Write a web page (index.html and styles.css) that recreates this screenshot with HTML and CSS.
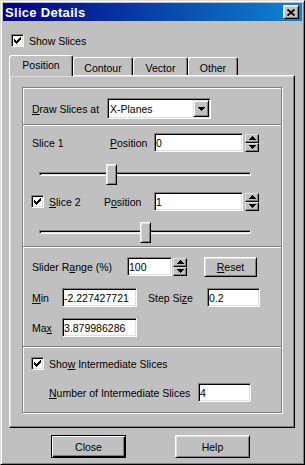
FILE: index.html
```html
<!DOCTYPE html>
<html lang="en">
<head>
    <meta charset="UTF-8">
    <title>Slice Details</title>
    <link rel="stylesheet" href="styles.css">
</head>
<body>

<div class="window">
    <div class="titlebar">
        <span class="title">Slice Details</span>
        <button class="title-close" type="button">
            <svg width="8" height="7" viewBox="0 0 8 7"><path d="M0.5 0.5L7.5 6.5M7.5 0.5L0.5 6.5" stroke="#000" stroke-width="1.8"/></svg>
        </button>
    </div>

    <div class="dialog-body">
        <div class="check-row top-check">
            <span class="check"><svg width="7" height="7" viewBox="0 0 7 7"><path d="M0 2h1v3h-1zM1 3h1v3h-1zM2 4h1v3h-1zM3 3h1v3h-1zM4 2h1v3h-1zM5 1h1v3h-1zM6 0h1v3h-1z" fill="#000"/></svg></span>
            <span class="check-text">Show Slices</span>
        </div>

        <div class="tabs">
            <div class="tab active tab-position">Position</div>
            <div class="tab tab-contour">Contour</div>
            <div class="tab tab-vector">Vector</div>
            <div class="tab tab-other">Other</div>
        </div>

        <div class="tab-panel">
            <div class="group">

                <!-- plane selection -->
                <div class="section sec-draw">
                    <div class="row row-combo">
                        <span class="lbl lbl-draw"><u>D</u>raw Slices at</span>
                        <div class="combo">
                            <span class="combo-value">X-Planes</span>
                            <span class="combo-btn"><svg width="7" height="4" viewBox="0 0 7 4"><path d="M0 0h7v1h-1v1h-1v1h-1v1h-1v-1h-1v-1h-1v-1h-1z" fill="#000"/></svg></span>
                        </div>
                    </div>
                </div>

                <!-- slice positions -->
                <div class="section sec-slices">
                    <div class="row">
                        <span class="lbl lbl-slice1">Slice 1</span>
                        <span class="lbl lbl-pos1"><u>P</u>osition</span>
                        <input class="edit edit-pos" type="text" value="0">
                        <div class="spin">
                            <span class="spin-btn"><svg width="7" height="4" viewBox="0 0 7 4"><path d="M3 0h1v1h1v1h1v1h1v1h-7v-1h1v-1h1v-1h1z" fill="#000"/></svg></span>
                            <span class="spin-btn"><svg width="7" height="4" viewBox="0 0 7 4"><path d="M0 0h7v1h-1v1h-1v1h-1v1h-1v-1h-1v-1h-1v-1h-1z" fill="#000"/></svg></span>
                        </div>
                    </div>
                    <div class="slider slider-1">
                        <div class="track"></div>
                        <div class="thumb" style="left: 67px"></div>
                    </div>
                    <div class="row row-slice2">
                        <div class="check-row check-slice2">
                            <span class="check"><svg width="7" height="7" viewBox="0 0 7 7"><path d="M0 2h1v3h-1zM1 3h1v3h-1zM2 4h1v3h-1zM3 3h1v3h-1zM4 2h1v3h-1zM5 1h1v3h-1zM6 0h1v3h-1z" fill="#000"/></svg></span>
                            <span class="check-text"><u>S</u>lice 2</span>
                        </div>
                        <span class="lbl lbl-pos2">P<u>o</u>sition</span>
                        <input class="edit edit-pos" type="text" value="1">
                        <div class="spin">
                            <span class="spin-btn"><svg width="7" height="4" viewBox="0 0 7 4"><path d="M3 0h1v1h1v1h1v1h1v1h-7v-1h1v-1h1v-1h1z" fill="#000"/></svg></span>
                            <span class="spin-btn"><svg width="7" height="4" viewBox="0 0 7 4"><path d="M0 0h7v1h-1v1h-1v1h-1v1h-1v-1h-1v-1h-1v-1h-1z" fill="#000"/></svg></span>
                        </div>
                    </div>
                    <div class="slider slider-2">
                        <div class="track"></div>
                        <div class="thumb" style="left: 101px"></div>
                    </div>
                </div>

                <!-- slider range -->
                <div class="section sec-range">
                    <div class="row">
                        <span class="lbl lbl-range">Slider R<u>a</u>nge (%)</span>
                        <input class="edit edit-range" type="text" value="100">
                        <div class="spin">
                            <span class="spin-btn"><svg width="7" height="4" viewBox="0 0 7 4"><path d="M3 0h1v1h1v1h1v1h1v1h-7v-1h1v-1h1v-1h1z" fill="#000"/></svg></span>
                            <span class="spin-btn"><svg width="7" height="4" viewBox="0 0 7 4"><path d="M0 0h7v1h-1v1h-1v1h-1v1h-1v-1h-1v-1h-1v-1h-1z" fill="#000"/></svg></span>
                        </div>
                        <button class="btn btn-reset" type="button"><u>R</u>eset</button>
                    </div>
                    <div class="row row-min">
                        <span class="lbl lbl-minmax"><u>M</u>in</span>
                        <input class="edit edit-minmax" type="text" value="-2.227427721">
                        <span class="lbl lbl-step">Step Si<u>z</u>e</span>
                        <input class="edit edit-small" type="text" value="0.2">
                    </div>
                    <div class="row row-max">
                        <span class="lbl lbl-minmax">Ma<u>x</u></span>
                        <input class="edit edit-minmax" type="text" value="3.879986286">
                    </div>
                </div>

                <!-- intermediate slices -->
                <div class="section sec-inter">
                    <div class="check-row check-inter">
                        <span class="check"><svg width="7" height="7" viewBox="0 0 7 7"><path d="M0 2h1v3h-1zM1 3h1v3h-1zM2 4h1v3h-1zM3 3h1v3h-1zM4 2h1v3h-1zM5 1h1v3h-1zM6 0h1v3h-1z" fill="#000"/></svg></span>
                        <span class="check-text">Sho<u>w</u> Intermediate Slices</span>
                    </div>
                    <div class="row row-number">
                        <span class="lbl lbl-number"><u>N</u>umber of Intermediate Slices</span>
                        <input class="edit edit-small" type="text" value="4">
                    </div>
                </div>

            </div>
        </div>

        <div class="buttons">
            <button class="btn btn-default" type="button">Close</button>
            <button class="btn btn-help" type="button">Help</button>
        </div>
    </div>
</div>

</body>
</html>
```

FILE: styles.css
```css
body {
    margin: 0;
    background-color: #c0c0c0;
}
.window {
    width: 305px;
    height: 465px;
    box-sizing: border-box;
    padding: 2px;
    border: 1px solid;
    border-color: #dfdfdf #000 #000 #dfdfdf;
    box-shadow: inset 1px 1px #fff, inset -1px -1px #808080;
    background-color: #c0c0c0;
    font-family: "Liberation Sans", Arial, sans-serif;
    font-size: 10.5px;
    color: #000;
}
button, input {
    font: inherit;
    color: inherit;
    margin: 0;
}
u {
    text-decoration: underline;
    text-underline-offset: 1px;
}

/* title bar */
.titlebar {
    height: 18px;
    display: flex;
    align-items: center;
    justify-content: space-between;
    padding: 0 3px 0 2px;
    background: linear-gradient(to right, #000080, #1084d0);
}
.title {
    color: #fff;
    font-weight: bold;
    font-size: 13px;
    letter-spacing: 0.3px;
}
.title-close {
    width: 16px;
    height: 14px;
    padding: 0;
    display: flex;
    align-items: center;
    justify-content: center;
    background-color: #c0c0c0;
    border: 1px solid;
    border-color: #fff #000 #000 #fff;
    box-shadow: inset 1px 1px #dfdfdf, inset -1px -1px #808080;
}

.dialog-body {
    padding: 13px 7px 0 6px;
}

/* check boxes */
.check-row {
    display: flex;
    align-items: center;
    height: 13px;
}
.check {
    width: 13px;
    height: 13px;
    box-sizing: border-box;
    flex: none;
    display: flex;
    align-items: center;
    justify-content: center;
    background-color: #fff;
    border: 1px solid;
    border-color: #808080 #fff #fff #808080;
    box-shadow: inset 1px 1px #000, inset -1px -1px #dfdfdf;
}
.check-text {
    margin-left: 5px;
}
.top-check {
    margin-left: 2px;
}

/* tabs */
.tabs {
    display: flex;
    align-items: flex-end;
    height: 20px;
    margin-top: 8px;
}
.tab {
    height: 18px;
    box-sizing: border-box;
    padding-top: 2px;
    display: flex;
    align-items: center;
    justify-content: center;
    border: 1px solid;
    border-bottom: 0;
    border-color: #fff #000 #000 #fff;
    border-radius: 3px 3px 0 0;
    box-shadow: inset -1px 0 #808080;
}
.tab.active {
    height: 21px;
    padding: 0 0 2px;
    margin-bottom: -1px;
    position: relative;
    z-index: 1;
    background-color: #c0c0c0;
}
.tab-position { width: 64px; }
.tab-contour { width: 60px; }
.tab-vector { width: 55px; }
.tab-other { width: 50px; }

.tab-panel {
    height: 353px;
    box-sizing: border-box;
    padding: 11px 0 0 12px;
    border: 1px solid;
    border-color: #fff #000 #000 #fff;
    box-shadow: inset -1px -1px #808080, inset 1px 1px #dfdfdf;
}

/* etched group */
.group {
    width: 260px;
    height: 326px;
    box-sizing: border-box;
    display: flex;
    flex-direction: column;
    border: 1px solid #808080;
    box-shadow: 1px 1px #fff, inset 1px 1px #fff;
}
.section {
    box-sizing: border-box;
    padding-left: 9px;
}
.section + .section {
    border-top: 1px solid #808080;
    box-shadow: inset 0 1px #fff;
}
.sec-draw { height: 36px; padding-top: 10px; }
.sec-slices { height: 122px; padding-top: 8px; }
.sec-range { height: 100px; padding-top: 10px; }
.sec-inter { height: 66px; padding-top: 10px; }

.row {
    display: flex;
    align-items: center;
    height: 19px;
}
.row-combo { height: 21px; }
.lbl {
    flex: none;
    white-space: nowrap;
}
.lbl-draw { width: 75px; }
.lbl-slice1 { width: 78px; }
.lbl-pos1 { width: 44px; }
.lbl-pos2 { width: 50px; }
.lbl-range { width: 95px; }
.lbl-minmax { width: 30px; }
.lbl-step { width: 59px; margin-left: 11px; }
.lbl-number { width: 149px; }

/* combo box */
.combo {
    width: 104px;
    height: 21px;
    box-sizing: border-box;
    display: flex;
    align-items: stretch;
    padding: 1px;
    background-color: #fff;
    border: 1px solid;
    border-color: #808080 #fff #fff #808080;
    box-shadow: inset 1px 1px #000, inset -1px -1px #dfdfdf;
}
.combo-value {
    flex: 1;
    display: flex;
    align-items: center;
    padding-left: 1px;
}
.combo-btn {
    width: 16px;
    box-sizing: border-box;
    display: flex;
    align-items: center;
    justify-content: center;
    background-color: #c0c0c0;
    border: 1px solid;
    border-color: #dfdfdf #000 #000 #dfdfdf;
    box-shadow: inset 1px 1px #fff, inset -1px -1px #808080;
}

/* edit boxes */
.edit {
    height: 19px;
    box-sizing: border-box;
    padding: 0 1px;
    background-color: #fff;
    border: 1px solid;
    border-color: #808080 #fff #fff #808080;
    box-shadow: inset 1px 1px #000, inset -1px -1px #dfdfdf;
    outline: none;
}
.edit-pos { width: 89px; }
.edit-range { width: 45px; }
.edit-minmax { width: 75px; }
.edit-small { width: 53px; }

/* spinner */
.spin {
    width: 14px;
    height: 18px;
    margin-left: 2px;
    display: flex;
    flex-direction: column;
}
.sec-range .spin { margin-left: 1px; }
.spin-btn {
    flex: 1;
    box-sizing: border-box;
    display: flex;
    align-items: center;
    justify-content: center;
    background-color: #c0c0c0;
    border: 1px solid;
    border-color: #dfdfdf #000 #000 #dfdfdf;
    box-shadow: inset -1px -1px #808080;
}

/* track bar */
.slider {
    position: relative;
    width: 212px;
    height: 21px;
    margin-left: 7px;
}
.slider-1 { margin-top: 12px; }
.slider-2 { margin-top: 11px; }
.track {
    position: absolute;
    top: 8px;
    left: 0;
    right: 0;
    height: 4px;
    box-sizing: border-box;
    border: 1px solid;
    border-color: #808080 #fff #fff #808080;
    box-shadow: inset 1px 1px #000, inset -1px -1px #dfdfdf;
}
.thumb {
    position: absolute;
    top: 0;
    width: 11px;
    height: 21px;
    box-sizing: border-box;
    background-color: #c0c0c0;
    border: 1px solid;
    border-color: #fff #000 #000 #fff;
    box-shadow: inset 1px 1px #dfdfdf, inset -1px -1px #808080;
}

.row-slice2 { margin-top: 7px; }
.check-slice2 {
    width: 73px;
    margin-left: -1px;
}
.row-min { margin-top: 12px; }
.row-max { margin-top: 11px; }
.check-inter { margin-left: -1px; }
.row-number {
    margin-top: 13px;
    padding-left: 17px;
}

/* push buttons */
.btn {
    height: 23px;
    padding: 0;
    background-color: #c0c0c0;
    border: 1px solid;
    border-color: #fff #000 #000 #fff;
    box-shadow: inset 1px 1px #dfdfdf, inset -1px -1px #808080;
}
.btn-reset {
    width: 53px;
    height: 20px;
    margin-left: 17px;
}
.btn-default {
    width: 75px;
    border-color: #000;
    box-shadow: inset 1px 1px #fff, inset -1px -1px #000, inset -2px -2px #808080;
}
.btn-help {
    width: 75px;
    margin-left: 49px;
}
.buttons {
    display: flex;
    margin-top: 7px;
    padding-left: 42px;
}
```
